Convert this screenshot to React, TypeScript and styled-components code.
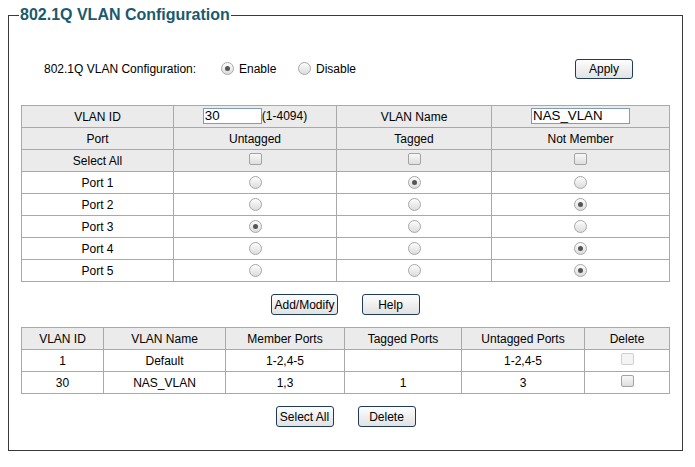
import React from 'react';
import styled, { createGlobalStyle, css } from 'styled-components';

const GlobalStyle = createGlobalStyle`
  html, body { margin: 0; padding: 0; background: #fff; }
  body {
    font-family: "Liberation Sans", Arial, sans-serif;
    font-size: 12px;
    color: #000;
  }
`;

const Page = styled.div`
  padding: 5px 8px 0 8px;
  width: 675px;
`;

const Fieldset = styled.fieldset`
  margin: 0;
  border: 1px solid #3a3a3a;
  padding: 0 12px 23px 12px;
  min-width: 0;
`;

const Legend = styled.legend`
  padding: 0 1px;
  margin-left: -2px;
  font-size: 16px;
  font-weight: 700;
  line-height: 20px;
  color: #1b5a6d;
`;

const ModeRow = styled.div`
  display: flex;
  align-items: center;
  height: 20px;
  margin-top: 34px;
  padding: 0 37px 0 23px;
`;

const ModeLabel = styled.span`
  width: 177px;
`;

const Option = styled.label`
  display: flex;
  align-items: center;
  gap: 5px;
  width: 77px;
`;

const Radio = styled.span<{ $on?: boolean }>`
  display: inline-block;
  box-sizing: border-box;
  width: 13px;
  height: 13px;
  border-radius: 50%;
  border: 1px solid #a8a8a8;
  background: linear-gradient(#fdfdfd, #dcdcdc);
  position: relative;
  vertical-align: middle;
  margin-top: -2px;
  ${p => p.$on && css`
    &::after {
      content: '';
      position: absolute;
      left: 3px;
      top: 3px;
      width: 5px;
      height: 5px;
      border-radius: 50%;
      background: #555;
    }
  `}
`;

const Check = styled.span<{ $disabled?: boolean }>`
  display: inline-block;
  box-sizing: border-box;
  width: 13px;
  height: 12px;
  border-radius: 2px;
  vertical-align: middle;
  margin-top: -4px;
  border: 1px solid ${p => (p.$disabled ? '#cfcfcf' : '#a3a3a3')};
  background: ${p => (p.$disabled ? '#f4f4f4' : 'linear-gradient(#f8f8f8, #dedede)')};
`;

const Button = styled.button`
  box-sizing: border-box;
  height: 21px;
  min-width: 58px;
  padding: 0 2px;
  border: 1px solid #203c5c;
  border-radius: 3px;
  background: linear-gradient(#fdfdfd, #e2e2e2);
  font-family: "Liberation Sans", Arial, sans-serif;
  font-size: 12px;
  color: #000;
  cursor: pointer;
`;

const ApplyButton = styled(Button)`
  margin-left: auto;
  height: 20px;
`;

const Table = styled.table<{ $top: number }>`
  width: 649px;
  margin-top: ${p => p.$top}px;
  border-collapse: collapse;
  table-layout: fixed;
`;

const Col = styled.col<{ $w: number }>`
  width: ${p => p.$w}px;
`;

const Row = styled.tr<{ $head?: boolean }>`
  background: ${p => (p.$head ? '#ebebeb' : '#fff')};
`;

const Cell = styled.td`
  height: 21px;
  padding: 0;
  border: 1px solid #a9a9a9;
  text-align: center;
  line-height: 14px;
  white-space: nowrap;
`;

const TextBox = styled.input`
  box-sizing: border-box;
  height: 16px;
  padding: 0 1px;
  margin: 0;
  border: 1px solid #7f9db9;
  font-family: "Liberation Sans", Arial, sans-serif;
  font-size: 13.33px;
  line-height: 14px;
  color: #000;
  background: #fff;
  vertical-align: middle;
  margin-top: -2px;
`;

const IdBox = styled(TextBox)`
  width: 59px;
`;

const NameBox = styled(TextBox)`
  width: 99px;
`;

const ButtonBar = styled.div`
  display: flex;
  justify-content: center;
  gap: 24px;
  margin-top: 12px;
`;

type Member = 'u' | 't' | 'n';

const ports: { name: string; m: Member }[] = [
  { name: 'Port 1', m: 't' },
  { name: 'Port 2', m: 'n' },
  { name: 'Port 3', m: 'u' },
  { name: 'Port 4', m: 'n' },
  { name: 'Port 5', m: 'n' },
];

const vlans = [
  { id: '1', name: 'Default', member: '1-2,4-5', tagged: '', untagged: '1-2,4-5', locked: true },
  { id: '30', name: 'NAS_VLAN', member: '1,3', tagged: '1', untagged: '3', locked: false },
];

export default function App() {
  return (
    <Page>
      <GlobalStyle />
      <Fieldset>
        <Legend>802.1Q VLAN Configuration</Legend>

        <ModeRow>
          <ModeLabel>802.1Q VLAN Configuration:</ModeLabel>
          <Option><Radio $on />Enable</Option>
          <Option><Radio />Disable</Option>
          <ApplyButton>Apply</ApplyButton>
        </ModeRow>

        <Table $top={26}>
          <colgroup>
            <Col $w={152} />
            <Col $w={163} />
            <Col $w={155} />
            <Col $w={178} />
          </colgroup>
          <tbody>
            <Row $head>
              <Cell>VLAN ID</Cell>
              <Cell><IdBox defaultValue="30" />(1-4094)</Cell>
              <Cell>VLAN Name</Cell>
              <Cell><NameBox defaultValue="NAS_VLAN" /></Cell>
            </Row>
            <Row $head>
              <Cell>Port</Cell>
              <Cell>Untagged</Cell>
              <Cell>Tagged</Cell>
              <Cell>Not Member</Cell>
            </Row>
            <Row $head>
              <Cell>Select All</Cell>
              <Cell><Check /></Cell>
              <Cell><Check /></Cell>
              <Cell><Check /></Cell>
            </Row>
            {ports.map(p => (
              <Row key={p.name}>
                <Cell>{p.name}</Cell>
                <Cell><Radio $on={p.m === 'u'} /></Cell>
                <Cell><Radio $on={p.m === 't'} /></Cell>
                <Cell><Radio $on={p.m === 'n'} /></Cell>
              </Row>
            ))}
          </tbody>
        </Table>

        <ButtonBar>
          <Button>Add/Modify</Button>
          <Button>Help</Button>
        </ButtonBar>

        <Table $top={12}>
          <colgroup>
            <Col $w={82} />
            <Col $w={122} />
            <Col $w={119} />
            <Col $w={117} />
            <Col $w={123} />
            <Col $w={85} />
          </colgroup>
          <tbody>
            <Row $head>
              <Cell>VLAN ID</Cell>
              <Cell>VLAN Name</Cell>
              <Cell>Member Ports</Cell>
              <Cell>Tagged Ports</Cell>
              <Cell>Untagged Ports</Cell>
              <Cell>Delete</Cell>
            </Row>
            {vlans.map(v => (
              <Row key={v.id}>
                <Cell>{v.id}</Cell>
                <Cell>{v.name}</Cell>
                <Cell>{v.member}</Cell>
                <Cell>{v.tagged}</Cell>
                <Cell>{v.untagged}</Cell>
                <Cell><Check $disabled={v.locked} /></Cell>
              </Row>
            ))}
          </tbody>
        </Table>

        <ButtonBar>
          <Button>Select All</Button>
          <Button>Delete</Button>
        </ButtonBar>
      </Fieldset>
    </Page>
  );
}
